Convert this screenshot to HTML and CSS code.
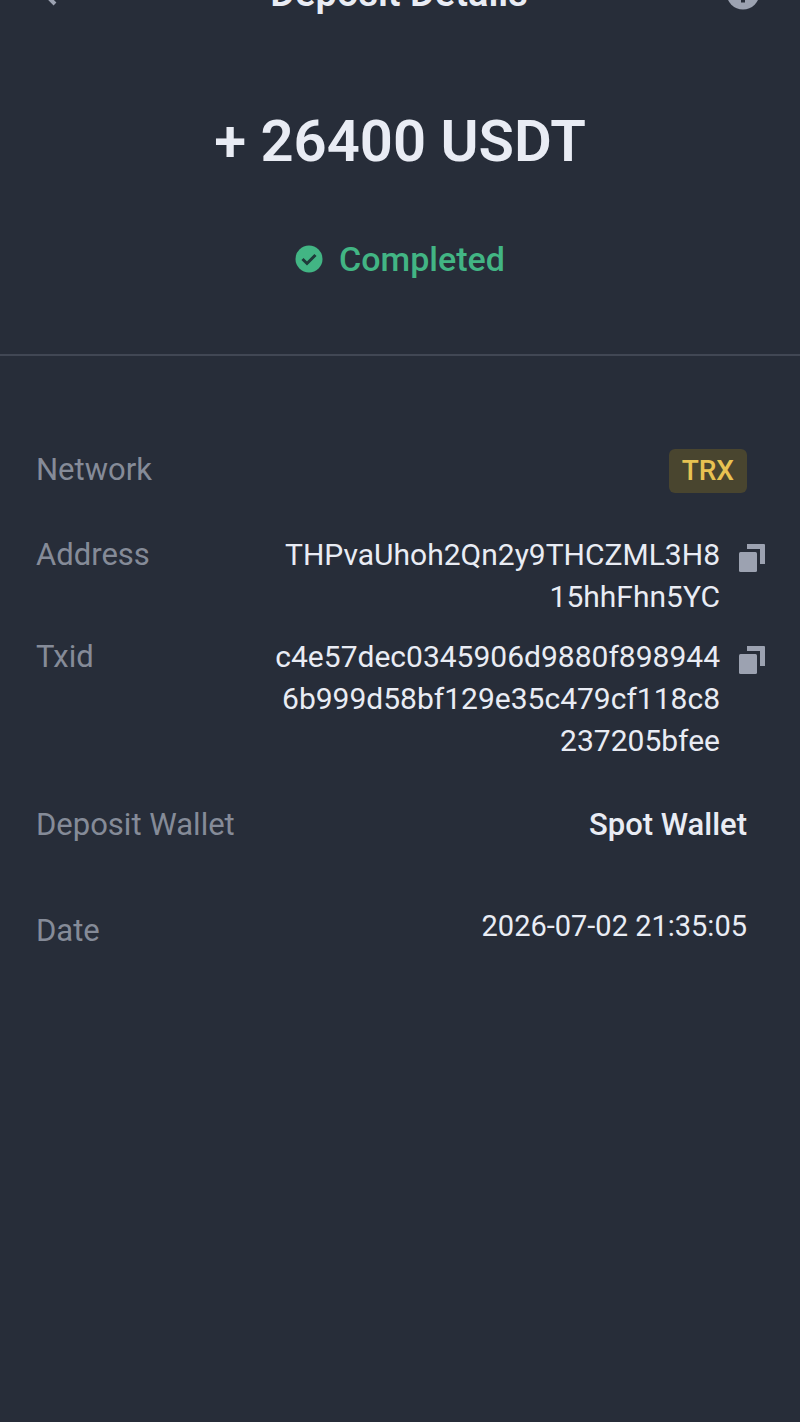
FILE: index.html
```html
<!DOCTYPE html>
<html lang="en">
<head>
  <meta charset="UTF-8">
  <meta name="viewport" content="width=device-width, initial-scale=1">
  <title>Deposit Details</title>
  <link rel="stylesheet" href="styles.css">
</head>
<body>
  <header class="topbar">
    <button class="icon-btn" type="button" aria-label="Back">
      <svg width="32" height="32" viewBox="0 0 32 32"><path d="M17 3 L4 16 L15 27" fill="none" stroke="currentColor" stroke-width="4"/></svg>
    </button>
    <h1 class="title">Deposit Details</h1>
    <button class="icon-btn" type="button" aria-label="Help">
      <svg width="34" height="34" viewBox="0 0 34 34"><circle cx="17" cy="17" r="16.500" fill="currentColor"/><path d="M17 26.500V14M13 14h4" fill="none" stroke="#272d39" stroke-width="4"/></svg>
    </button>
  </header>

  <section class="summary">
    <p class="amount">+ 26400 USDT</p>
    <p class="status">
      <svg width="28" height="28" viewBox="0 0 28 28"><circle cx="14" cy="14" r="13.500" fill="currentColor"/><path d="M7.500 14l4.500 4.500 8.500-8.500" fill="none" stroke="#1f3b3a" stroke-width="3"/></svg>
      Completed
    </p>
  </section>

  <dl class="details">
    <div class="row">
      <dt>Network</dt>
      <dd><span class="tag">TRX</span></dd>
    </div>
    <div class="row copyable">
      <dt>Address</dt>
      <dd>THPvaUhoh2Qn2y9THCZML3H8<br>15hhFhn5YC</dd>
      <dd>
        <button class="copy-btn" type="button" aria-label="Copy address">
          <svg width="26" height="30" viewBox="0 0 26 30"><rect x="0" y="9" width="18" height="20" rx="1.500"/><path d="M8 1h17a1 1 0 0 1 1 1v19h-5V6H8z"/></svg>
        </button>
      </dd>
    </div>
    <div class="row copyable txid">
      <dt>Txid</dt>
      <dd>c4e57dec0345906d9880f898944<br>6b999d58bf129e35c479cf118c8<br>237205bfee</dd>
      <dd>
        <button class="copy-btn" type="button" aria-label="Copy txid">
          <svg width="26" height="30" viewBox="0 0 26 30"><rect x="0" y="9" width="18" height="20" rx="1.500"/><path d="M8 1h17a1 1 0 0 1 1 1v19h-5V6H8z"/></svg>
        </button>
      </dd>
    </div>
    <div class="row">
      <dt>Deposit Wallet</dt>
      <dd class="wallet">Spot Wallet</dd>
    </div>
    <div class="row date">
      <dt>Date</dt>
      <dd>2026-07-02 21:35:05</dd>
    </div>
  </dl>
</body>
</html>
```
FILE: styles.css
```css
* { box-sizing: border-box; }
body { margin: 0; min-height: 100vh; background-color: #272d39; color: #e9ecf4; font-family: Roboto, "Liberation Sans", sans-serif; font-size: 30px; line-height: 42px; }
h1, p, dl, dd { margin: 0; }
svg { display: block; fill: currentColor; }
button { padding: 0; border: 0; background: none; color: #9ca2b1; cursor: pointer; }

/* the bar is scrolled partly out of view */
.topbar { display: flex; align-items: center; justify-content: space-between; height: 48px; margin-top: -31px; padding: 0 40px; }
.title { font-size: 38px; font-weight: 600; line-height: 48px; }

.summary { padding: 82px 36px 74px; border-bottom: 2px solid #414754; text-align: center; }
.amount { font-size: 58px; font-weight: 600; line-height: 84px; }
.status { display: flex; align-items: center; justify-content: center; gap: 16px; margin-top: 55px; color: #42b584; font-size: 34px; font-weight: 500; }

.details { padding: 93px 53px 40px 36px; }
.row { display: flex; align-items: flex-start; justify-content: space-between; margin-bottom: 41px; }
dt { color: #858b98; font-size: 31px; }
dd { text-align: right; }
.tag { display: block; padding: 1px 13px; border-radius: 6px; background-color: #49452f; color: #e8c252; font-size: 28px; font-weight: 500; }

.copyable { margin-right: -18px; margin-bottom: 18px; }
.copyable dt { flex: 1; }
.copy-btn { display: block; width: 26px; margin: 9px 0 0 19px; }
.txid { margin-bottom: 42px; }
.wallet { font-size: 31px; font-weight: 500; }
.date { margin-top: 64px; }
.date dd { font-size: 29px; line-height: 32px; }
```
